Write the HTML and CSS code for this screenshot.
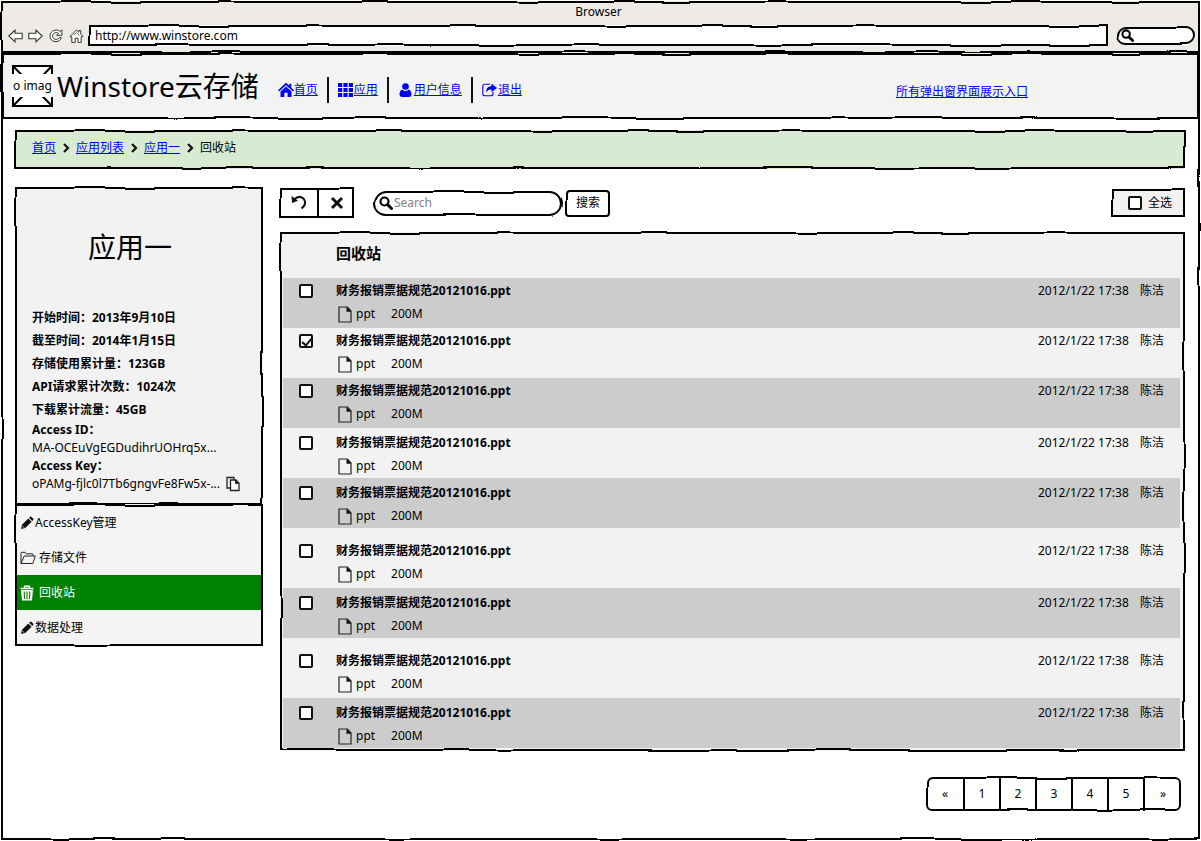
FILE: index.html
```html
<!DOCTYPE html>
<html lang="zh-CN">
<head>
<meta charset="utf-8">
<meta name="viewport" content="width=device-width, initial-scale=1">
<title>Winstore云存储</title>
<link rel="stylesheet" href="styles.css">
</head>
<body>
<svg class="defs" width="0" height="0" aria-hidden="true">
  <filter id="wobble" x="-5%" y="-10%" width="110%" height="120%" color-interpolation-filters="sRGB">
    <feTurbulence type="fractalNoise" baseFrequency="0.02" numOctaves="1" seed="4" result="n"/>
    <feDisplacementMap in="SourceGraphic" in2="n" scale="4" xChannelSelector="R" yChannelSelector="G"/>
    <feGaussianBlur stdDeviation="0.3"/>
  </filter>
  <symbol id="file" viewBox="0 0 14 17"><path d="M1 1h8.500l3.500 4v11H1z" fill="none" stroke="#222" stroke-width="1.200"/><path d="M8.500.8v5H13.300z" fill="#111"/></symbol>
  <symbol id="pencil" viewBox="0 0 14 14"><path d="M1 13l1-4.200 6.300-6.300 3.300 3.300L5.300 12z M9.100 1.800l.9-.9q.8-.7 1.600 0l1.600 1.600q.7.800 0 1.600l-.9.900z" fill="#111"/><path d="M2.300 9.800l2 2" stroke="#f4f4f4" stroke-width=".7"/></symbol>
  <symbol id="glass" viewBox="0 0 14 14"><circle cx="5.500" cy="5.500" r="4" fill="none" stroke="#000" stroke-width="2.200"/><path d="M8.500 8.500l4 4" stroke="#000" stroke-width="3" stroke-linecap="round"/></symbol>
</svg>

<div class="browser">
  <div class="chrome sketch">
    <div class="window-title">Browser</div>
    <div class="bar">
      <button class="tool" type="button" aria-label="后退"><svg width="15" height="14" viewBox="0 0 15 14"><path d="M.8 7L7 1.200v3h7.200v5.600H7v3z" fill="#fff" stroke="#333" stroke-width="1.100"/></svg></button>
      <button class="tool" type="button" aria-label="前进"><svg width="15" height="14" viewBox="0 0 15 14"><path d="M14.200 7L8 1.200v3H.8v5.600H8v3z" fill="#fff" stroke="#333" stroke-width="1.100"/></svg></button>
      <button class="tool" type="button" aria-label="刷新"><svg width="15" height="14" viewBox="0 0 15 14"><path d="M13.900.8v5.500H8.600l2-2C8.100 2.500 4.600 4.200 4.600 7.200c0 3.300 4.600 4.500 6.500 1.600h2.400C11.600 14.300 2 14 2 7.100 2 1.300 9.100-.5 12.300 2.600z" fill="#fff" stroke="#333"/></svg></button>
      <button class="tool" type="button" aria-label="主页"><svg width="16" height="14" viewBox="-1 0 16 14"><path d="M1 7.500L7.500 1l2.300 2.200V1.500h2v3.800L14 7.500l-1.800.3V13.400H9V9.200H6.200v4.200H2.800V7.800z" fill="#fff" stroke="#333"/><path d="M4.500 6.300l3-2.900 3 2.900" fill="none" stroke="#333" stroke-width=".7"/></svg></button>
      <div class="address sketch"><input type="text" value="http://www.winstore.com" aria-label="地址"></div>
      <div class="mini-search sketch pill"><svg width="13" height="13"><use href="#glass"/></svg><input type="text" aria-label="浏览器搜索"></div>
    </div>
  </div>

  <div class="viewport sketch">
    <header class="site-header sketch">
      <div class="logo"><svg viewBox="0 0 41 42" width="41" height="42"><path d="M1 1h39v40H1zM1 1l39 40M40 1L1 41" fill="#fff" stroke="#000" stroke-width="2"/></svg><span>o imag</span></div>
      <h1>Winstore云存储</h1>
      <nav class="site-nav">
        <a href="#home"><svg width="16" height="16" viewBox="0 0 16 16"><path d="M8 .8l3.300 3V1.700h2v4L16 8.200l-1 1.200L8 3.200 1 9.400 0 8.200zM8 4.600l5.500 4.800V15H9.600v-4.200H6.400V15H2.500V9.400z" fill="#00f"/></svg><span>首页</span></a>
        <a href="#apps"><svg width="15" height="16" viewBox="0 0 15 16"><path d="M0 1h4.200v4H0zm5.400 0h4.200v4H5.400zm5.400 0H15v4h-4.200zM0 6h4.200v4H0zm5.400 0h4.200v4H5.400zm5.400 0H15v4h-4.200zM0 11h4.200v4H0zm5.400 0h4.200v4H5.400zm5.400 0H15v4h-4.200z" fill="#00f"/></svg><span>应用</span></a>
        <a href="#user"><svg width="15" height="16" viewBox="-1 0 15 16"><circle cx="6.500" cy="4.500" r="3.300" fill="#00f"/><path d="M3.200 7.400Q6.500 10.500 9.800 7.400 12.600 8.800 12.500 12.500 12.300 15 9.500 15h-6Q.7 15 .5 12.500.4 8.800 3.200 7.400z" fill="#00f"/></svg><span>用户信息</span></a>
        <a href="#logout"><svg width="15" height="16" viewBox="0 0 15 16"><path d="M8 2.300H2.800Q.8 2.300.8 4.300v7.400q0 2 2 2H9q2 0 2-2V10" fill="none" stroke="#00f" stroke-width="1.100"/><path d="M9.500 1.500L15 6l-5.500 4.300V7.600Q5.600 7.300 4.500 11 3.200 4.500 9.500 4z" fill="#00f"/></svg><span>退出</span></a>
      </nav>
      <a class="dialogs" href="#dialogs">所有弹出窗界面展示入口</a>
    </header>

    <nav class="crumbs sketch" aria-label="路径">
      <a href="#home">首页</a>
      <svg width="8" height="12" viewBox="0 0 8 12"><path d="M2 2l4 4-4 4" fill="none" stroke="#111" stroke-width="2.200"/></svg>
      <a href="#list">应用列表</a>
      <svg width="8" height="12" viewBox="0 0 8 12"><path d="M2 2l4 4-4 4" fill="none" stroke="#111" stroke-width="2.200"/></svg>
      <a href="#app1">应用一</a>
      <svg width="8" height="12" viewBox="0 0 8 12"><path d="M2 2l4 4-4 4" fill="none" stroke="#111" stroke-width="2.200"/></svg>
      <span>回收站</span>
    </nav>

    <div class="columns">
      <aside class="sidebar">
        <section class="app-info sketch">
          <h2>应用一</h2>
          <ul class="stats">
            <li>开始时间：2013年9月10日</li>
            <li>截至时间：2014年1月15日</li>
            <li>存储使用累计量：123GB</li>
            <li>API请求累计次数：1024次</li>
            <li>下载累计流量：45GB</li>
          </ul>
          <dl class="keys">
            <dt>Access ID：</dt>
            <dd>MA-OCEuVgEGDudihrUOHrq5x...</dd>
            <dt>Access Key：</dt>
            <dd>oPAMg-fjlc0l7Tb6gngvFe8Fw5x-...<button class="tool" type="button" aria-label="复制"><svg width="14" height="16" viewBox="0 0 14 16"><path d="M4 12H1V1.500h7V4" fill="none" stroke="#222" stroke-width="1.300"/><path d="M4.500 4H10l3 3.200V14.500H4.500z" fill="#fff" stroke="#222" stroke-width="1.300"/><path d="M9.500 4v3.500H13" fill="#222" stroke="#222"/></svg></button></dd>
          </dl>
        </section>
        <nav class="menu sketch">
          <a href="#keys"><svg width="14" height="14"><use href="#pencil"/></svg>AccessKey管理</a>
          <a class="spaced" href="#files"><svg width="16" height="14" viewBox="0 0 16 14"><path d="M1 12.500V2.500Q1 1.300 2 1.300h3l1.300 1.500H12q1 0 1 1V5M1 12.500L4.200 5H15.300l-2.500 7.500z" fill="none" stroke="#222" stroke-linejoin="round"/></svg>存储文件</a>
          <a class="spaced active" href="#trash" aria-current="page"><svg width="14" height="16" viewBox="0 0 14 16"><path d="M4.500 3V1.200h5V3M.5 3.500h13" fill="none" stroke="#fff" stroke-width="1.400"/><path d="M1 5h12l-1 10.500H2z" fill="#fff"/><path d="M4.200 6.500l.3 7.500M7 6.500V14M9.800 6.500L9.500 14" stroke="#008000" stroke-width="1.100"/></svg>回收站</a>
          <a href="#data"><svg width="14" height="14"><use href="#pencil"/></svg>数据处理</a>
        </nav>
      </aside>

      <main class="main">
        <div class="toolbar">
          <div class="actions sketch">
            <button type="button" aria-label="还原"><svg width="18" height="16" viewBox="0 0 18 16"><path d="M4 4.500Q10-.5 14 4.200 17 9.500 11.500 13.500" fill="none" stroke="#111" stroke-width="2"/><path d="M1.500 1l.6 7L8 5.800z" fill="#111"/></svg></button>
            <button type="button" aria-label="删除"><svg width="14" height="14" viewBox="0 0 14 14"><path d="M2 2l10 10M12 2L2 12" stroke="#111" stroke-width="3"/></svg></button>
          </div>
          <form class="search">
            <div class="search-box sketch pill"><svg width="14" height="14"><use href="#glass"/></svg><input type="text" placeholder="Search" aria-label="Search"></div>
            <button class="search-btn sketch" type="submit">搜索</button>
          </form>
          <label class="select-all sketch"><input class="tick" type="checkbox">全选</label>
        </div>

        <div class="panel sketch">
          <table class="files">
            <thead>
              <tr><td></td><th scope="col" colspan="3">回收站</th></tr>
            </thead>
            <tbody>
              <tr><td class="pick"><input class="tick" type="checkbox" aria-label="选择文件 1"></td><td class="file"><b>财务报销票据规范20121016.ppt</b><span class="meta"><svg width="14" height="17"><use href="#file"/></svg><span>ppt</span><span class="size">200M</span></span></td><td class="date">2012/1/22 17:38</td><td class="owner">陈洁</td></tr>
              <tr><td class="pick"><input class="tick" type="checkbox" checked aria-label="选择文件 2"></td><td class="file"><b>财务报销票据规范20121016.ppt</b><span class="meta"><svg width="14" height="17"><use href="#file"/></svg><span>ppt</span><span class="size">200M</span></span></td><td class="date">2012/1/22 17:38</td><td class="owner">陈洁</td></tr>
              <tr><td class="pick"><input class="tick" type="checkbox" aria-label="选择文件 3"></td><td class="file"><b>财务报销票据规范20121016.ppt</b><span class="meta"><svg width="14" height="17"><use href="#file"/></svg><span>ppt</span><span class="size">200M</span></span></td><td class="date">2012/1/22 17:38</td><td class="owner">陈洁</td></tr>
              <tr class="low"><td class="pick"><input class="tick" type="checkbox" aria-label="选择文件 4"></td><td class="file"><b>财务报销票据规范20121016.ppt</b><span class="meta"><svg width="14" height="17"><use href="#file"/></svg><span>ppt</span><span class="size">200M</span></span></td><td class="date">2012/1/22 17:38</td><td class="owner">陈洁</td></tr>
              <tr class="low"><td class="pick"><input class="tick" type="checkbox" aria-label="选择文件 5"></td><td class="file"><b>财务报销票据规范20121016.ppt</b><span class="meta"><svg width="14" height="17"><use href="#file"/></svg><span>ppt</span><span class="size">200M</span></span></td><td class="date">2012/1/22 17:38</td><td class="owner">陈洁</td></tr>
              <tr class="tall"><td class="pick"><input class="tick" type="checkbox" aria-label="选择文件 6"></td><td class="file"><b>财务报销票据规范20121016.ppt</b><span class="meta"><svg width="14" height="17"><use href="#file"/></svg><span>ppt</span><span class="size">200M</span></span></td><td class="date">2012/1/22 17:38</td><td class="owner">陈洁</td></tr>
              <tr class="low"><td class="pick"><input class="tick" type="checkbox" aria-label="选择文件 7"></td><td class="file"><b>财务报销票据规范20121016.ppt</b><span class="meta"><svg width="14" height="17"><use href="#file"/></svg><span>ppt</span><span class="size">200M</span></span></td><td class="date">2012/1/22 17:38</td><td class="owner">陈洁</td></tr>
              <tr class="tall"><td class="pick"><input class="tick" type="checkbox" aria-label="选择文件 8"></td><td class="file"><b>财务报销票据规范20121016.ppt</b><span class="meta"><svg width="14" height="17"><use href="#file"/></svg><span>ppt</span><span class="size">200M</span></span></td><td class="date">2012/1/22 17:38</td><td class="owner">陈洁</td></tr>
              <tr class="low"><td class="pick"><input class="tick" type="checkbox" aria-label="选择文件 9"></td><td class="file"><b>财务报销票据规范20121016.ppt</b><span class="meta"><svg width="14" height="17"><use href="#file"/></svg><span>ppt</span><span class="size">200M</span></span></td><td class="date">2012/1/22 17:38</td><td class="owner">陈洁</td></tr>
            </tbody>
          </table>
        </div>

        <nav class="pager sketch" aria-label="分页">
          <button type="button">«</button><button type="button">1</button><button type="button">2</button><button type="button">3</button><button type="button">4</button><button type="button">5</button><button type="button">»</button>
        </nav>
      </main>
    </div>
  </div>
</div>
</body>
</html>
```

FILE: styles.css
```css
* { box-sizing: border-box; }

body {
  margin: 0;
  background: #fff;
  color: #000;
  font: 12px/18px "Noto Sans", "Noto Sans CJK SC", sans-serif;
}

h1, h2, ul, dl, dd { margin: 0; padding: 0; font-weight: 400; }
ul { list-style: none; }
svg { display: block; flex: none; }
.defs { position: absolute; }
a { color: #00f; }

button, input { font: inherit; color: inherit; }
button { padding: 0; border: 0; background: none; cursor: pointer; }
input[type="text"] {
  min-width: 0;
  flex: 1;
  padding: 0;
  border: 0;
  background: none;
  outline: none;
}
input::placeholder { color: #808080; opacity: 1; }

/* Hand-drawn outline laid over a box */
.sketch { position: relative; }
.sketch::after {
  content: "";
  position: absolute;
  inset: 0;
  border: 2px solid #000;
  border-radius: inherit;
  filter: url(#wobble);
  pointer-events: none;
}
.pill { border-radius: 13px; }

/* Browser window */
.browser {
  display: flex;
  flex-direction: column;
  min-height: 100vh;
  padding: 1px;
}
.chrome { background: #eeebe6; }
.window-title { text-align: center; line-height: 22px; padding-right: 4px; }
.bar { display: flex; align-items: center; padding: 2px 5px 7px 7px; gap: 5px; }
.address {
  flex: 1;
  display: flex;
  height: 21px;
  padding: 0 6px;
  background: #fff;
}
.mini-search {
  display: flex;
  align-items: center;
  width: 78px;
  height: 18px;
  margin-left: 4px;
  padding-left: 4px;
  background: #fff;
}
.viewport { flex: 1; padding: 0 1px 28px; }

/* Header */
.site-header {
  display: flex;
  align-items: center;
  height: 66px;
  padding: 0 10px;
  background: #f3f3f3;
}
.logo { position: relative; }
.logo span {
  position: absolute;
  inset: 9px 0 10px;
  background: #fff;
  text-align: center;
  line-height: 23px;
  white-space: nowrap;
}
h1 { margin-left: 4px; font-size: 28px; line-height: 40px; white-space: nowrap; }
.site-nav { display: flex; margin: 8px 0 0 19px; }
.site-nav a { display: flex; align-items: center; gap: 1px; height: 26px; color: #00f; text-decoration: none; }
.site-nav a:first-child { gap: 0; }
.site-nav a span, .crumbs a, .dialogs { text-decoration: underline; }
.site-nav a + a { margin-left: 9px; padding-left: 9px; border-left: 2px solid #111; }
.dialogs { margin: 12px 161px 0 auto; }

/* Breadcrumbs */
.crumbs {
  display: flex;
  align-items: center;
  gap: 6px;
  height: 39px;
  margin: 11px 14px 0 13px;
  padding: 0 17px 4px;
  background: #d8ead2;
}

.columns { display: flex; gap: 17px; align-items: flex-start; margin: 18px 14px 0 13px; }

/* Sidebar */
.sidebar { flex: 0 0 248px; }
.app-info { padding: 40px 17px 12px; background: #f2f2f2; }
h2 { padding-right: 18px; font-size: 28px; line-height: 40px; text-align: center; }
.stats { margin: 39px 0 0; font-weight: 700; line-height: 23px; }
.keys dt { font-weight: 700; }
.keys dd { display: flex; align-items: center; gap: 6px; height: 18px; white-space: nowrap; }
.menu { margin-top: -1px; padding: 1px 2px; background: #f4f4f4; }
.menu a {
  display: flex;
  align-items: center;
  gap: 1px;
  height: 35px;
  padding-left: 3px;
  color: #000;
  text-decoration: none;
}
.menu .spaced { gap: 3px; }
.menu .active { gap: 5px; background: #008000; color: #fff; }

/* Toolbar */
.main { flex: 1; min-width: 0; }
.toolbar { display: flex; align-items: center; height: 30px; margin: 1px 0 14px; }
.actions { display: flex; height: 30px; }
.actions button { display: flex; align-items: center; justify-content: center; width: 37px; }
.actions button + button { border-left: 2px solid #000; }
.search { display: flex; align-items: center; gap: 3px; margin-left: 20px; }
.search-box { display: flex; align-items: center; width: 189px; height: 25px; padding: 0 12px 0 5px; gap: 1px; background: #fff; }
.search-btn { width: 44px; height: 27px; border-radius: 4px; }
.select-all {
  display: flex;
  align-items: center;
  gap: 6px;
  height: 28px;
  margin-left: auto;
  padding: 0 13px 0 16px;
  background: #f2f2f2;
}
.tick {
  appearance: none;
  display: block;
  width: 14px;
  height: 14px;
  margin: 0;
  border: 2px solid #111;
  border-radius: 2px;
  background: #fff;
}
.tick:checked::before {
  content: "";
  display: block;
  width: 4px;
  height: 8px;
  margin: 0 0 0 3px;
  border: solid #111;
  border-width: 0 2px 2px 0;
  rotate: 40deg;
}

/* File list */
.panel { padding: 2px 5px 3px 3px; background: #f2f2f2; }
.files { width: 100%; border-collapse: collapse; }
.files th { padding: 0 0 6px; height: 44px; font-size: 15px; text-align: left; }
.files td { padding: 4px 0 0; vertical-align: top; white-space: nowrap; }
.files tbody tr { height: 50px; }
.files tbody tr:nth-child(odd) { background: #ccc; }
.files tbody .low td { padding-top: 6px; }
.files tbody .tall { height: 60px; }
.files tbody .tall td { padding-top: 14px; }
.files .pick { width: 53px; padding-left: 16px; }
.pick .tick { margin-top: 2px; }
.file b { display: block; }
.meta { display: flex; align-items: center; gap: 4px; height: 24px; margin-top: 2px; padding-left: 2px; }
.size { margin-left: 12px; }
.files .date { width: 102px; }
.files .owner { width: 40px; }

/* Pagination */
.pager {
  display: flex;
  width: fit-content;
  height: 34px;
  margin: 26px 4px 0 auto;
  border-radius: 6px;
}
.pager button { width: 36px; }
.pager button + button { border-left: 2px solid #000; }
.pager button:last-child { width: 38px; }
```
